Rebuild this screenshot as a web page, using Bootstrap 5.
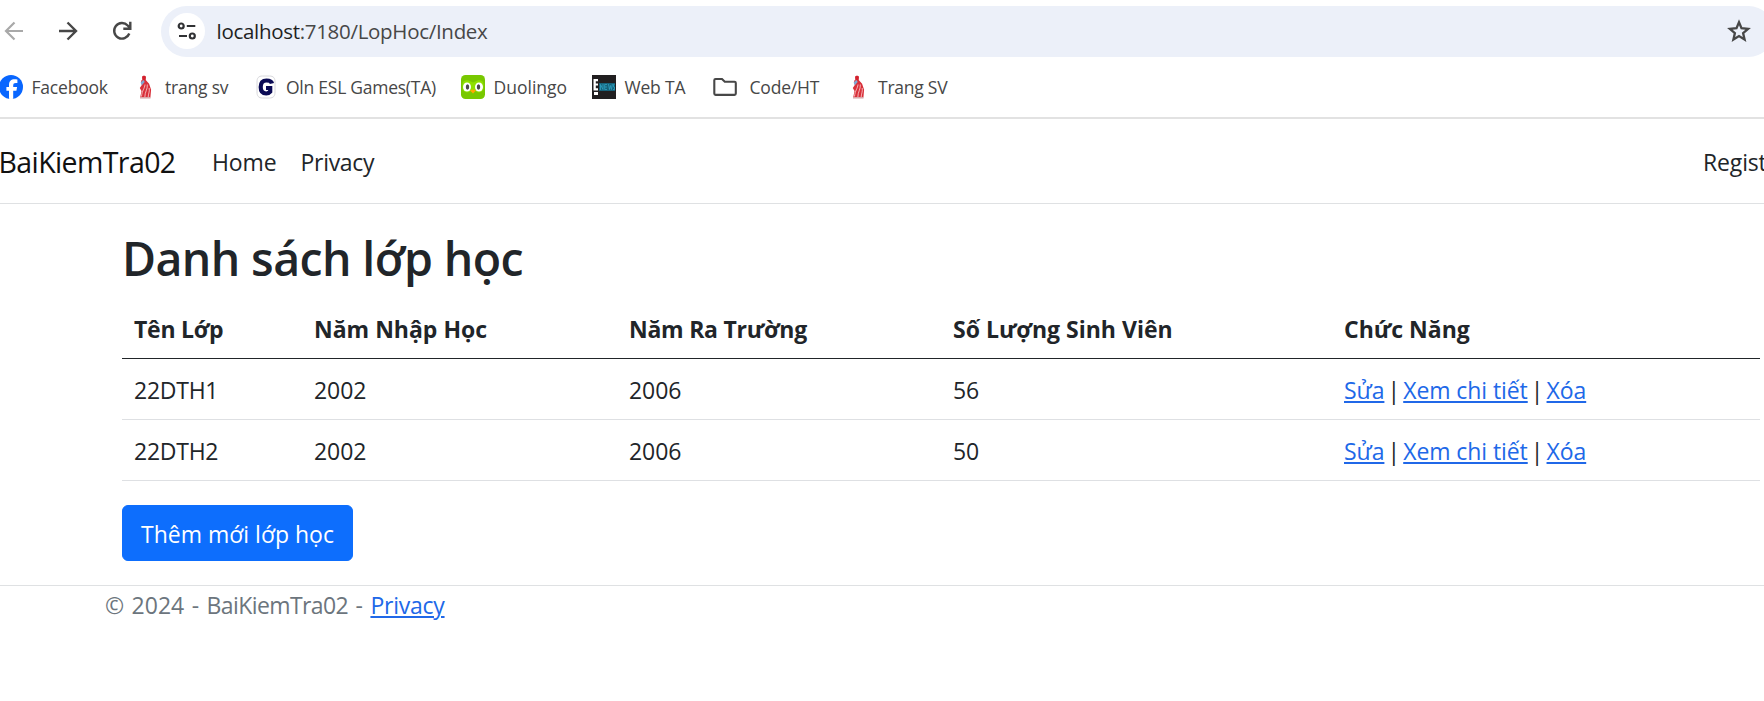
<!DOCTYPE html>
<html lang="vi">
<head>
<meta charset="utf-8">
<title>Index - BaiKiemTra02</title>
<link rel="stylesheet" href="https://cdn.jsdelivr.net/npm/bootstrap@5.3.0/dist/css/bootstrap.min.css">
<style>
  body { font: 23px/36px "Open Sans", "Noto Sans", sans-serif; color: #212529; background: #fff; overflow: hidden; }
  svg { display: block; flex: none; }
  a { color: #2068e8; text-decoration-thickness: 2px; text-underline-offset: 2px; }

  /* browser chrome */
  .chrome-top { height: 119px; border-bottom: 2px solid #e2e2e2; }
  .toolbar { height: 57px; padding-top: 6px; }
  .nav-icons { width: 161px; padding: 0 0 1px 2px; gap: 30px; color: #474747; }
  .omnibox { width: 1613px; height: 51px; border-radius: 26px; background: #ecf0f9; flex: none; padding: 0 23px 1px 8px; }
  .site-info { width: 36px; height: 36px; background: #fff; margin-right: 11.5px; }
  .address { font-size: 20.5px; line-height: 28px; letter-spacing: -.3px; color: #474747; }
  .address b { font-weight: 400; color: #1f1f1f; }
  .bookmarks { display: grid; grid-template-columns: 133.5px 121px 207.5px 131px 121px 132.5px auto; margin: 18px 0 0 -1px; font-size: 17.5px; line-height: 24px; letter-spacing: -.2px; color: #474747; white-space: nowrap; }
  .bookmarks > div { display: flex; gap: 8.5px; }
  .bookmarks > .tight { letter-spacing: -.25px; }
  .bookmarks > .wide { letter-spacing: 0; }

  /* application */
  .app-nav { height: 85px; border-bottom: 1px solid #dfe1e3; padding: 1px 0 0; white-space: nowrap; }
  .app-brand { font-size: 28.5px; line-height: 45px; letter-spacing: -.6px; margin-left: -1.5px; padding-top: 1px; width: 213.5px; color: #111; }
  .app-nav .nav-link { padding: 0; color: #212529; letter-spacing: -.15px; flex: none; }
  .nav-home { width: 88.5px; }
  .app-nav .nav-privacy { width: 1402.5px; letter-spacing: -.3px; }
  .page-main { margin-left: 122px; width: 1638px; padding-top: 24px; }
  .page-title { font-size: 46.5px; line-height: 57px; font-weight: 600; letter-spacing: -.62px; margin: 0 0 10px; padding-top: 2px; }
  .class-table { --bs-table-bg: transparent; table-layout: fixed; margin-bottom: 24px; color: #212529; border-color: #dee0e3; }
  .class-table > :not(caption) > * > * { padding: 13px 12px 11px; height: 61px; border-bottom-width: 1px; }
  .class-table > thead > tr > th { border-bottom-color: #212529; }
  .class-table > tbody { border-top: 1px solid #212529; }
  .th-tight { letter-spacing: -.25px; }
  .class-table td { letter-spacing: -.08px; }
  .class-table td:first-child { letter-spacing: -.25px; }
  .sep { display: inline-block; width: 18.8px; text-align: center; }
  .btn-add { font-size: 23px; line-height: 36px; padding: 10px 0 8px; width: 231px; border-radius: 6px; border-width: 1px; background: #0d6efd; }
  .app-footer { border-top: 1px solid #dfe1e3; margin-top: 24px; padding: 1.5px 0 0 105px; color: #6c757d; word-spacing: 1.500px; }
  .app-footer span { letter-spacing: -.6px; }
  .app-footer a { letter-spacing: -.25px; }
</style>
</head>
<body>
<svg width="0" height="0" class="position-absolute">
  <symbol id="statue" viewBox="0 0 24 24">
    <path d="M9 1.500 11 .5l2 1-.3 3.700-3.400.6z" fill="#d3222e"/>
    <path d="M8 5.500l4.500-.7 3.600 4 2 6-.7 7.700H7.200L8.500 16 6.800 13l2-3z" fill="#d8303a"/>
    <path d="M7.600 7.500 10.500 5l1.200 2-2.800 3.200z" fill="#7fa9d3"/>
    <path d="M12 9.500c-.3 4-3 6-3.500 12M14.300 9.500c.5 5-2.500 7-2.500 13M16.200 13c.6 4-1 6-1 9" fill="none" stroke="#fbd5d5" stroke-width=".8"/>
    <path d="M7 22.800h10.500" stroke="#d9a9ab" stroke-width="1.500"/>
  </symbol>
</svg>

<div class="chrome-top">
  <div class="toolbar d-flex">
    <div class="nav-icons d-flex align-items-center flex-shrink-0">
      <svg width="24" height="24" viewBox="0 0 24 24" fill="none" stroke="#a9a9a9" stroke-width="2.200"><path d="M21 12H4.500M12.500 3.500 4 12l8.500 8.500"/></svg>
      <svg width="24" height="24" viewBox="0 0 24 24" fill="none" stroke="currentColor" stroke-width="2.400"><path d="M3 12h16.500M11.500 3.500 20 12l-8.500 8.500"/></svg>
      <svg width="24" height="24" viewBox="0 0 24 24" fill="none" stroke="currentColor" stroke-width="2.400"><path d="M19.300 14.500a7.800 7.800 0 1 1-1.600-8L20 9M20.300 2.700v7h-7"/></svg>
    </div>
    <div class="omnibox d-flex align-items-center">
      <div class="site-info rounded-circle d-flex align-items-center justify-content-center">
        <svg width="20" height="20" viewBox="0 0 20 20" fill="none" stroke="#303134" stroke-width="2.200"><circle cx="4.200" cy="5" r="2.500"/><path d="M9.800 5h8.500M2 15h8"/><circle cx="15.300" cy="15" r="2.500"/></svg>
      </div>
      <div class="address"><b>localhost</b>:7180/LopHoc/Index</div>
      <svg class="ms-auto" width="24" height="24" viewBox="0 0 24 24" fill="none" stroke="#474747" stroke-width="2.300"><path d="m12 3.200 2.500 6 6.600.6-5 4.300 1.500 6.400-5.600-3.400-5.600 3.400 1.500-6.400-5-4.300 6.600-.6z"/></svg>
    </div>
  </div>
  <div class="bookmarks">
    <div><svg width="24" height="24" viewBox="0 0 24 24"><circle cx="12" cy="12" r="12" fill="#0866ff"/><path d="M10 23.850v-8.100H7.400V12H10v-1.700c0-4.100 1.900-6 5.900-6 .8 0 2 .1 2.500.3v3.300h-1.500c-2 0-2.700.7-2.700 2.700V12h3.900l-.7 3.750h-3.200v8.100A12 12 0 0 1 10 23.850z" fill="#fff"/></svg>Facebook</div>
    <div><svg width="24" height="24"><use href="#statue"/></svg>trang sv</div>
    <div class="tight"><svg width="24" height="24" viewBox="0 0 24 24"><path d="M8.500 1h7c4 0 5.500 2 5.500 6v10c0 4-1.500 6-5.500 6h-7C4.500 23 3 21 3 17V7c0-4 1.500-6 5.500-6z" fill="#fff" stroke="#d8d8dc"/><path d="M18 8.500C17.500 6.300 15.500 5.500 12.500 5.500 8.500 5.500 6.700 7.500 6.700 12s1.800 6.500 5.500 6.500c1.900 0 3-.6 4-1.800V13H12" fill="none" stroke="#0b0b55" stroke-width="4.200"/></svg>Oln ESL Games(TA)</div>
    <div class="wide"><svg width="24" height="24" viewBox="0 0 24 24"><rect width="24" height="24" rx="4.500" fill="#78c800"/><path d="M1.500 9c0-3 3-4.500 6-3.500l4.500 2 4.500-2c3-1 6 .5 6 3.500v4c0 4-5 6-8 3h-5c-3 3-8 1-8-3z" fill="#8ee000"/><ellipse cx="6" cy="12" rx="4" ry="4.600" fill="#fff"/><ellipse cx="18" cy="12" rx="4" ry="4.600" fill="#fff"/><ellipse cx="6.500" cy="12" rx="1.700" ry="2.700" fill="#4b4b4b"/><ellipse cx="17.500" cy="12" rx="1.700" ry="2.700" fill="#4b4b4b"/><path d="M9 15.500q3-2 6 0l-3 3z" fill="#ffa800"/></svg>Duolingo</div>
    <div><svg width="24" height="24" viewBox="0 0 24 24"><path d="M0 0h24v24H0z" fill="#211f20"/><path d="M1.500 4H6v2.200H3.800V8.500H6v2H3.800v2.800H6V15.500H1.500zM2 17h4v3H2z" fill="#fff"/><path d="M7 8h16v8H7z" fill="#16627a"/><path d="M8.500 15V9.500l2.500 5V9M15 9.500h-2.300v5H15M12.700 12H15M16.500 9l1 5.500 1-4 1 4 .8-5.500M22.500 9.500h-1v2.500h1v2.500h-1.500" fill="none" stroke="#2fa1c0" stroke-width=".8"/></svg>Web TA</div>
    <div><svg class="me-1" width="24" height="24" viewBox="0 0 24 24" fill="none" stroke="#474747" stroke-width="2.100"><path d="M1.300 5.300q0-1.300 1.300-1.300H9l2.800 2.800h9.700q1.300 0 1.300 1.300v10.500q0 1.300-1.300 1.300H2.600q-1.300 0-1.300-1.300z"/></svg>Code/HT</div>
    <div class="tight"><svg width="24" height="24"><use href="#statue"/></svg>Trang SV</div>
  </div>
</div>

<header>
  <nav class="app-nav d-flex align-items-center">
    <div class="app-brand flex-shrink-0">BaiKiemTra02</div>
    <a class="nav-link nav-home" href="#">Home</a>
    <a class="nav-link nav-privacy" href="#">Privacy</a>
    <a class="nav-link" href="#">Regist</a>
  </nav>
</header>

<main class="page-main">
  <h1 class="page-title">Danh sách lớp học</h1>
  <table class="table class-table">
    <colgroup><col width="180"><col width="315"><col width="324"><col width="391"><col width="428"></colgroup>
    <thead><tr><th class="th-tight">Tên Lớp</th><th>Năm Nhập Học</th><th class="th-tight">Năm Ra Trường</th><th>Số Lượng Sinh Viên</th><th>Chức Năng</th></tr></thead>
    <tbody>
      <tr><td>22DTH1</td><td>2002</td><td>2006</td><td>56</td><td><a href="#">Sửa</a><span class="sep">|</span><a href="#">Xem chi tiết</a><span class="sep">|</span><a href="#">Xóa</a></td></tr>
      <tr><td>22DTH2</td><td>2002</td><td>2006</td><td>50</td><td><a href="#">Sửa</a><span class="sep">|</span><a href="#">Xem chi tiết</a><span class="sep">|</span><a href="#">Xóa</a></td></tr>
    </tbody>
  </table>
  <a class="btn btn-primary btn-add d-block" href="#">Thêm mới lớp học</a>
</main>

<footer class="app-footer">© 2024 - <span>BaiKiemTra02</span> - <a href="#">Privacy</a></footer>
<script src="https://cdn.jsdelivr.net/npm/bootstrap@5.3.0/dist/js/bootstrap.bundle.min.js"></script>
</body>
</html>
